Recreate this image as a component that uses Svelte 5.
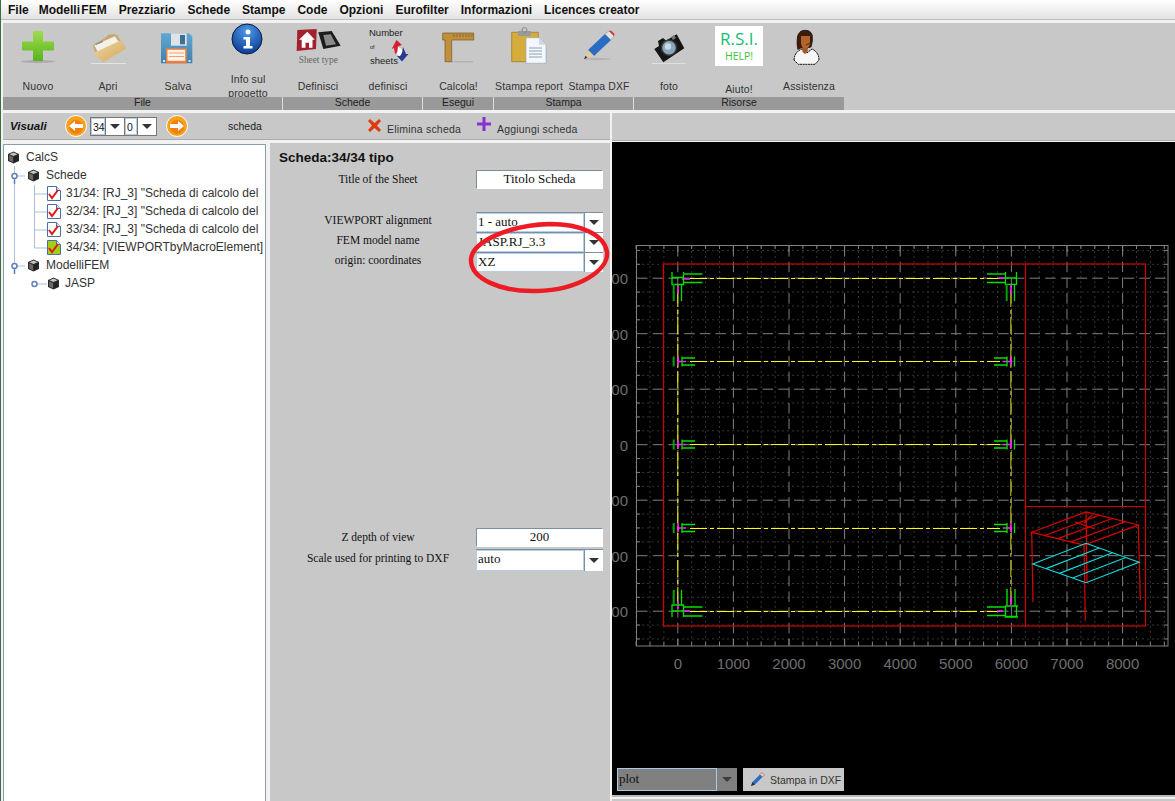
<script>
  const menu = ['File','Modelli FEM','Prezziario','Schede','Stampe','Code','Opzioni','Eurofilter','Informazioni','Licences creator'];
  const sheets = [
    { t:'31/34: [RJ_3] "Scheda di calcolo del', on:false },
    { t:'32/34: [RJ_3] "Scheda di calcolo del', on:false },
    { t:'33/34: [RJ_3] "Scheda di calcolo del', on:false },
    { t:'34/34: [VIEWPORTbyMacroElement]', on:true }
  ];
  const X0 = 677.8, Y0 = 278.2, DX = 55.6, DY = 55.5;
  const majorX = [0,1,2,3,4,5,6,7,8].map(i => X0 + i*DX);
  const majorY = [0,1,2,3,4,5,6].map(i => Y0 + i*DY);
  const minorX = [], minorY = [];
  for (let i=-3;i<=35;i++){ const x=X0+i*DX/4; if(x>636&&x<1168&&i%4!==0) minorX.push(x); }
  for (let i=-2;i<=28;i++){ const y=Y0+i*DY/4; if(y>245&&y<646&&i%4!==0) minorY.push(y); }
  const xLabels = ['0','1000','2000','3000','4000','5000','6000','7000','8000'];
  const yLabels = ['00','00','00','0','00','00','00'];
  const mids = [361.5, 444.5, 528];

  const L=(a,b,t)=>[a[0]+(b[0]-a[0])*t,a[1]+(b[1]-a[1])*t];
  function wire(l,b,r,f){
    const out=[];
    for(const t of [.25,.5,.75]){ out.push([L(l,f,t),L(b,r,t)]); }
    return out;
  }
  const rl=[1031.7,532.3],rb=[1086,512],rr=[1138.3,525],rf=[1084,545];
  const cl=[1032.7,564],cb=[1086,543.3],cr=[1139,562.3],cf=[1086,582.7];
  const pts=(...p)=>p.map(q=>q.join(',')).join(' ');
</script>

{#snippet cube()}
  <svg class="cube" width="13" height="13" viewBox="0 0 13 13"><path d="M6.500 .5 12 3v7l-5.500 2.500L1 10V3z" fill="#2c2c2c"/><path d="M6.500 1.500 10.500 3.200 6.500 5 2.500 3.200z" fill="#c4c4c4"/><path d="M6 6v5.200L2.200 9.500V4.300z" fill="#6a6a6a"/><path d="M7 6v5.200l3.800-1.700V4.300z" fill="#222"/></svg>
{/snippet}

{#snippet sheet(on)}
  <svg class="leaf" width="14" height="15" viewBox="0 0 14 15"><path d="M.5 .5h9l4 4v10H.5z" fill={on ? '#a3d017' : '#fff'} stroke="#4a6fa8"/><path d="M9.500 .5v4h4" fill="#dfe8f5" stroke="#4a6fa8"/><path d="M2 8l3 4 6-8" fill="none" stroke="#e01818" stroke-width="2"/></svg>
{/snippet}

{#snippet icoPlus()}
  <svg class="ico" viewBox="0 0 70 43"><defs><linearGradient id="gp" x1="0" y1="0" x2="0" y2="1"><stop offset="0" stop-color="#9fdc50"/><stop offset="1" stop-color="#58b41c"/></linearGradient></defs><ellipse cx="35" cy="38.500" rx="17" ry="1.500" fill="#aaa"/><path d="M31 8h8a1 1 0 0 1 1 1v9.500h10a1 1 0 0 1 1 1v7a1 1 0 0 1-1 1H40V37a1 1 0 0 1-1 1h-8a1 1 0 0 1-1-1v-9.500H20a1 1 0 0 1-1-1v-7a1 1 0 0 1 1-1h10V9a1 1 0 0 1 1-1z" fill="url(#gp)"/></svg>
{/snippet}
{#snippet icoFolder()}
  <svg class="ico" viewBox="0 0 70 43"><defs><linearGradient id="gf" x1="0" y1="0" x2="1" y2="1"><stop offset="0" stop-color="#eed8a4"/><stop offset="1" stop-color="#d2a659"/></linearGradient></defs><rect x="18" y="40" width="35" height="1" fill="#e4e4e4"/><path d="M20 22l12-7 3-3 6-1 3 1 5 8-27 9z" fill="#c9a568"/><path d="M21 22l21-9 6 9-23 8z" fill="#f4f1e8" stroke="#b8aa8c" stroke-width=".5"/><path d="M22 21l8-3.500v1.500l-7 3z" fill="#8a8a8a"/><path d="M20.500 30l26-12c1.500-.5 2.500 0 3 1l3 5.500c.5 1 0 1.500-1 2.200L31 38.800c-1 .5-2 .5-2.500-.5z" fill="url(#gf)"/></svg>
{/snippet}
{#snippet icoSave()}
  <svg class="ico" viewBox="0 0 70 43"><defs><linearGradient id="gs" x1="0" y1="0" x2="0" y2="1"><stop offset="0" stop-color="#62a8d2"/><stop offset="1" stop-color="#3f7fae"/></linearGradient></defs><path d="M18 10.300h28l3.300 3.300v26.700H18z" fill="url(#gs)"/><path d="M28 10.300h15.700v12.400H28z" fill="#dfe3e6"/><path d="M37 12h5v9.300h-5z" fill="#3e6f94"/><path d="M23 25.300h20.700v15H23z" fill="#ee7d3c"/><path d="M24.500 26.800h17.700v11H24.500z" fill="#fff3e8"/><path d="M26 30h15M26 33.500h15" stroke="#f0a078"/><rect x="20" y="37" width="2" height="2" fill="#dce6ee"/><rect x="45.500" y="37" width="2" height="2" fill="#dce6ee"/></svg>
{/snippet}
{#snippet icoInfo()}
  <svg class="ico" viewBox="0 0 70 43"><defs><radialGradient id="gi" cx=".5" cy=".25" r=".8"><stop offset="0" stop-color="#4d9ae8"/><stop offset="1" stop-color="#08358e"/></radialGradient></defs><circle cx="34" cy="16" r="15" fill="url(#gi)" stroke="#0a1a40"/><circle cx="35" cy="9" r="2.500" fill="#fff"/><path d="M30.500 14h6.500v9h2.500v2.500h-9V23H33v-6.500h-2.500z" fill="#fff"/></svg>
{/snippet}
{#snippet icoType()}
  <svg class="ico" viewBox="0 0 70 43"><path d="M14.300 7 33.700 6 33 26l-19.300 2z" fill="#a3202c"/><path d="M24.300 8.700l7.500 8h-2.300v8h-3.500v-5h-3.500v5h-3.800v-8H16z" fill="#fff"/><path d="M35.300 9.300 48.700 8l9 14.700L40.300 26z" fill="#1c1c1c"/><path d="M40.300 12l7.400-.7 5.300 10-10 1.400z" fill="#8a8a8a"/><text x="35.300" y="39.500" class="st">Sheet type</text></svg>
{/snippet}
{#snippet icoNumber()}
  <svg class="ico" viewBox="0 0 70 43"><text x="16" y="13" class="nt">Number</text><text x="17" y="25.500" class="nt small">of</text><text x="17" y="40.500" class="nt">sheets</text><path d="M43.500 17 49 22l-3 1 1 4-5 4-1-6-2.300 1z" fill="#d42030"/><path d="M45 23l5 5-1 7-5-4z" fill="#fff"/><path d="M50 24l3 7h2.500L49 38.500 44 33h3l2-3z" fill="#2a3a94"/></svg>
{/snippet}
{#snippet icoRuler()}
  <svg class="ico" viewBox="0 0 70 43"><rect x="24" y="38" width="25" height="1.500" fill="#b4b4b4"/><path d="M18.700 10H49.700V17H27.700V38.700H21V17H18.700z" fill="#bf8f3e" stroke="#7a5a24" stroke-width=".7"/><path d="M30 11v3M33 11v3M36 11v3M39 11v3M42 11v3M45 11v3M48 11v3" stroke="#7a5a24" stroke-width=".7"/></svg>
{/snippet}
{#snippet icoClip()}
  <svg class="ico" viewBox="0 0 70 43"><path d="M17.700 9.300h26.600v29.400H17.700z" fill="#d6ac3c" stroke="#a07c24" stroke-width=".8"/><path d="M24 8h13v5H24z" fill="#9a9a9a"/><circle cx="30.500" cy="7" r="2.500" fill="none" stroke="#888"/><path d="M32 14.700h13l7 7v18.600H32z" fill="#f4f7fb" stroke="#9ab" stroke-width=".7"/><path d="M45 14.700v7h7" fill="#cfd8e2"/><path d="M35 25h13M35 28h13M35 31h13M35 34h13" stroke="#8aa0b8"/></svg>
{/snippet}
{#snippet icoPencil()}
  <svg class="ico" viewBox="0 0 70 43"><ellipse cx="33" cy="36" rx="14" ry="1.200" fill="#b4b4b4"/><path d="M24 27 41 11l6 6-17 16z" fill="#2a6cc4"/><path d="M24 27l6 6-10 3.300z" fill="#e0c9a0"/><path d="M20 36.300l1.500-3.500 2 2z" fill="#333"/><path d="M41 11l4-3 5 5-3 4z" fill="#e2e2e2" stroke="#888" stroke-width=".5"/><path d="M45 8l2-.5 3.500 3.500-.5 2z" fill="#d83030"/></svg>
{/snippet}
{#snippet icoCam()}
  <svg class="ico" viewBox="0 0 70 43"><rect x="18" y="40" width="34" height="1" fill="#e0e0e0"/><path d="M20.300 26 25 23l-1-5 5-3 3 2.500L42.700 11.300 50.300 25.300 29.300 39.300z" fill="#151515"/><path d="M37 14l3-2 2 3-3 2z" fill="#777"/><circle cx="35" cy="24.700" r="7.500" fill="#8aa6ba" stroke="#3a3a3a" stroke-width="1.500"/><circle cx="34" cy="23.500" r="3.200" fill="#c8dae6"/></svg>
{/snippet}
{#snippet icoRsi()}
  <div class="rsi"><div class="rsi1">R.S.I.</div><div class="rsi2">HELP!</div></div>
{/snippet}
{#snippet icoPerson()}
  <svg class="ico" viewBox="0 0 70 43"><path d="M20 37c.5-6 3-9 8-11l5 4 5-4c4 2 7 5 7 11l-4 4.300H24.300z" fill="#f6f6f6" stroke="#111" stroke-width="1" stroke-dasharray="2 .6"/><path d="M23 14c1-6 6-7 9-7s6 2 6.500 6c.5 4 0 8-1 11l-2 1H28l-4.500 2c-1-4-1-9-.5-13z" fill="#3c1d0c"/><path d="M27 13h9v7c-.5 4-3 6-5 6s-3.500-2.500-4-6z" fill="#b5622d"/><path d="M28 25h6l-.5 4-2.500 2-2.500-2z" fill="#a5582a"/><path d="M26 9c4-3 10-2 12 3v7" fill="none" stroke="#222" stroke-width="1"/><path d="M38 19l-6 3" stroke="#222" stroke-width=".8"/></svg>
{/snippet}

{#snippet tool(label, icon)}
  <div class="tool">
    <div class="icon">{@render icon()}</div>
    <div class="lab"><span>{label}</span></div>
  </div>
{/snippet}

{#snippet combo(value, cls = '')}
  <div class="combo {cls}"><div class="cval">{value}</div><div class="carrow"><i></i></div></div>
{/snippet}

<div class="app">
  <nav class="menu">
    {#each menu as m}<span>{m}</span>{/each}
  </nav>

  <div class="body">
    <section class="ribbon">
      <div class="group g280">
        <div class="tools">
          {@render tool('Nuovo', icoPlus)}
          {@render tool('Apri', icoFolder)}
          {@render tool('Salva', icoSave)}
          {@render tool('Info sul progetto', icoInfo)}
        </div>
        <div class="gname">File</div>
      </div>
      <div class="group g140">
        <div class="tools">
          {@render tool('Definisci', icoType)}
          {@render tool('definisci', icoNumber)}
        </div>
        <div class="gname">Schede</div>
      </div>
      <div class="group g71">
        <div class="tools">{@render tool('Calcola!', icoRuler)}</div>
        <div class="gname">Esegui</div>
      </div>
      <div class="group g140">
        <div class="tools">
          {@render tool('Stampa report', icoClip)}
          {@render tool('Stampa DXF', icoPencil)}
        </div>
        <div class="gname">Stampa</div>
      </div>
      <div class="group g210 last">
        <div class="tools">
          {@render tool('foto', icoCam)}
          <div class="tool aiuto">
            <div class="icon">{@render icoRsi()}</div>
            <div class="lab"><span>Aiuto!</span></div>
          </div>
          {@render tool('Assistenza', icoPerson)}
        </div>
        <div class="gname">Risorse</div>
      </div>
    </section>

    <div class="split">
      <div class="leftside">
        <div class="bar2">
          <b class="visuali">Visuali</b>
          <svg class="round" width="22" height="22" viewBox="0 0 22 22"><circle cx="11" cy="11" r="10.500" fill="#f7a21a" stroke="#fff"/><circle cx="11" cy="12" r="7" fill="#f08010"/><path d="M4 11l6-5v3h8v4h-8v3z" fill="#fff"/></svg>
          <div class="spin">
            <span class="num">34</span><span class="sar"><i></i></span>
            <span class="num n2">0</span><span class="sar"><i></i></span>
          </div>
          <svg class="round r2" width="22" height="22" viewBox="0 0 22 22"><circle cx="11" cy="11" r="10.500" fill="#f7a21a" stroke="#fff"/><circle cx="11" cy="12" r="7" fill="#f08010"/><path d="M18 11l-6-5v3H4v4h8v3z" fill="#fff"/></svg>
          <span class="sc">scheda</span>
          <svg class="xi" width="15" height="15" viewBox="0 0 15 15"><path d="M1 3l2-2 4.500 4L12 1l2 2-4 4.500 4 4.500-2 2-4.500-4L3 14l-2-2 4-4.500z" fill="#e03a10"/></svg>
          <span class="act a1">Elimina scheda</span>
          <svg class="pl" width="14" height="14" viewBox="0 0 14 14"><path d="M5.500 0h3v5.500H14v3H8.500V14h-3V8.500H0v-3h5.500z" fill="#8a2fd0"/></svg>
          <span class="act a2">Aggiungi scheda</span>
        </div>

        <div class="panes">
          <aside class="tree">
            <svg class="lines" width="60" height="150" viewBox="0 0 60 150">
              <g stroke="#a9bfdc" fill="none">
                <path d="M10.500 21V121M10.500 31H21M10.500 121H21M30.500 40V103M30.500 49H43M30.500 67H43M30.500 85H43M30.500 103H43M30.500 139H43"/>
              </g>
              <g fill="#fff" stroke="#5c7fb8" stroke-width="1.500">
                <circle cx="10.500" cy="31" r="2.500"/><circle cx="10.500" cy="121" r="2.500"/><circle cx="30.500" cy="139" r="2.500"/>
              </g>
              <path d="M10.500 33v6M10.500 123v6" stroke="#5c7fb8" stroke-width="1.500"/>
            </svg>
            <div class="node l0">{@render cube()}<span>CalcS</span></div>
            <div class="node l1">{@render cube()}<span>Schede</span></div>
            {#each sheets as s}
              <div class="node l2">{@render sheet(s.on)}<span>{s.t}</span></div>
            {/each}
            <div class="node l1">{@render cube()}<span>ModelliFEM</span></div>
            <div class="node l2">{@render cube()}<span>JASP</span></div>
          </aside>

          <main class="form">
            <h2>Scheda:34/34 tipo</h2>
            <div class="row r19"><label>Title of the Sheet</label><div class="input">Titolo Scheda</div></div>
            <div class="sel1">
              <div class="row r20"><label>VIEWPORT alignment</label>{@render combo('1 - auto')}</div>
              <div class="row r20"><label>FEM model name</label>{@render combo('JASP.RJ_3.3')}</div>
              <div class="row r20"><label>origin: coordinates</label>{@render combo('XZ')}</div>
            </div>
            <div class="sel2">
              <div class="row r19"><label>Z depth of view</label><div class="input">200</div></div>
              <div class="row r22"><label>Scale used for printing to DXF</label>{@render combo('auto')}</div>
            </div>
            <svg class="ring" width="150" height="80" viewBox="0 0 150 80"><path d="M6 40C8 22 45 6 85 5c30 0 54 10 57 28 2 18-28 38-70 39C36 73 5 60 6 40z" fill="none" stroke="#ed1c24" stroke-width="4.500"/></svg>
          </main>
        </div>
      </div>

      <div class="rightside">
        <div class="bar2 blank"></div>
        <div class="plot">
          <svg class="chart" width="563" height="653" viewBox="612 142 563 653">
            <g stroke="#363636" stroke-dasharray="2 3">
              {#each minorX as x}<line x1={x} x2={x} y1="246" y2="645"/>{/each}
              {#each minorY as y}<line y1={y} y2={y} x1="637" x2="1167"/>{/each}
            </g>
            <g stroke="#808080" stroke-dasharray="10.500 5.200">
              {#each majorX as x}<line x1={x} x2={x} y1="246" y2="645"/>{/each}
              {#each majorY as y}<line y1={y} y2={y} x1="637" x2="1167"/>{/each}
            </g>
            <rect x="636.500" y="245.500" width="531.500" height="400.500" fill="none" stroke="#808080"/>
            <g stroke="#808080">
              {#each minorX as x}<line x1={x} x2={x} y1="642" y2="646"/><line x1={x} x2={x} y1="245" y2="249"/>{/each}
              {#each majorX as x}<line x1={x} x2={x} y1="639" y2="646"/><line x1={x} x2={x} y1="245" y2="252"/>{/each}
              {#each minorY as y}<line y1={y} y2={y} x1="636" x2="640"/><line y1={y} y2={y} x1="1164" x2="1168"/>{/each}
            </g>
            {#each xLabels as t, i}<text x={majorX[i]} y="669" class="ax" text-anchor="middle">{t}</text>{/each}
            {#each yLabels as t, i}<text x="628" y={majorY[i]+6} class="ax" text-anchor="end">{t}</text>{/each}

            <g fill="none" stroke="#d40000" stroke-width="1.200">
              <rect x="663.500" y="264" width="482" height="362"/>
              <path d="M1025.500 264V626M1025.500 506.500H1145.500"/>
            </g>

            <g fill="none" stroke="#ffff00" stroke-width="1" stroke-dasharray="17 3 4 3">
              <path d="M690 278.500H1000M690 361.500H1000M690 444.500H1000M690 528.500H1000M690 611.500H1000"/>
              <path d="M677.800 290V605"/>
            </g>
            <path d="M1010.800 290V605" fill="none" stroke="#b0b000" stroke-width="1.200" stroke-dasharray="17 3 4 3"/>

            <g fill="none" stroke="#ff20ff" stroke-width="1.600">
              {#each mids as y}
                <path d="M678 {y-5}v9M678 {y}h8M1011 {y-5}v9M1011 {y}h-8"/>
              {/each}
              <path d="M678 284v10M682 279h8M1011 284v10M1006 278h-8M678 601v8M682 611h8M1011 597v8M1003 611h-6"/>
            </g>
            <g fill="none" stroke="#00e000" stroke-width="1.300">
              {#each mids as y}
                <path d="M682 {y-5}v10M682 {y-3.500}h13M682 {y+3.500}h13M1014.500 {y-5}v10M1007 {y-3.500}h-13M1007 {y+3.500}h-13M1007 {y-5}v10"/>
              {/each}
              <path d="M672 277.500h11.500v7H672zM672 272v12M683.500 272v12M683.500 282.500h19M681.500 284v17"/>
              <path d="M1005.500 278h11v6.300h-11zM1005.500 272v12M1016.500 272v12M1005 282.500h-18M1014.500 284v17"/>
              <path d="M672 605h11.500v6H672zM672 605v12M683.500 605v12M683.500 607h19M683.500 616h19M681.500 590v15"/>
              <path d="M1005.500 606h11v10.500h-11zM1005 606h13M1005 617h13M1005 607h-18M1005 615.500h-18M1015 589v17"/>
            </g>
            <g fill="none" stroke="#00a000" stroke-width="2">
              {#each mids as y}<path d="M673.700 {y-5}v10"/>{/each}
              <path d="M683.500 274h19M673.700 284v17M673.700 590v15M1005 274h-18M1006.700 284v17M1007 589v16"/>
            </g>

            <g fill="none" stroke="#e00000" stroke-width="1.200">
              <polygon points={pts(rl,rb,rr,rf)}/>
              {#each wire(rl,rb,rr,rf) as w}<polyline points={pts(w[0],w[1])}/>{/each}
              <path d="M1075 522l20 7M1092 515l-8 8"/>
              <path d="M1031.700 532.300l1.300 70M1084 545l1.300 75.700M1138.300 525l2 75M1086 512l1 71"/>
            </g>
            <g fill="none" stroke="#10dada" stroke-width="1.200">
              <polygon points={pts(cl,cb,cr,cf)}/>
              {#each wire(cl,cb,cr,cf) as w}<polyline points={pts(w[0],w[1])}/>{/each}
            </g>
          </svg>

          <div class="controls">
            <div class="plotsel"><div class="pval">plot</div><div class="parr"><i></i></div></div>
            <div class="dxf">
              <svg width="15" height="15" viewBox="0 0 15 15"><path d="M1 14l1.500-4L10 2.500l2.500 2.500L5 12.500z" fill="#2a6cc4"/><path d="M10 2.500l2-2 2.500 2.500-2 2z" fill="#d8d8d8" stroke="#c04040" stroke-width=".6"/><path d="M1 14l1.500-4 2.500 2.500z" fill="#333"/></svg>
              <span>Stampa in DXF</span>
            </div>
          </div>
        </div>
        <div class="foot"></div>
      </div>
    </div>
  </div>
</div>

<style>
  :global(body) { margin: 0; background: #f2f2f2; }
  .app { width: 1175px; height: 801px; overflow: hidden; display: flex; flex-direction: column; box-sizing: border-box; border-left: 1px solid #3d6e3d; background: #f2f2f2; font-family: "Liberation Sans", Arial, sans-serif; color: #222; }

  .menu { height: 19px; flex: none; display: flex; align-items: center; gap: 12px; padding-left: 7px; background: linear-gradient(#fff, #e2e2e2); border-bottom: 1px solid #bdbdbd; font-weight: 700; font-size: 12px; color: #111; }
  .menu span:nth-child(1) { margin-right: -2px; }
  .menu span:nth-child(2) { word-spacing: -2px; }

  .body { flex: 1; min-height: 0; padding: 3px 0 0 2px; display: flex; flex-direction: column; }

  .ribbon { flex: none; height: 87px; display: flex; background: #c8c8c8; }
  .group { display: flex; flex-direction: column; flex: none; }
  .g280 { width: 280px; } .g140 { width: 140px; } .g71 { width: 71px; } .g210 { width: 210px; }
  .tools { display: flex; height: 74px; flex: none; }
  .gname { height: 13px; flex: none; background: #999; border-right: 1px solid #ddd; text-align: center; font-size: 10.500px; line-height: 11px; color: #222; }
  .last .gname { border-right: 0; }
  .tool { flex: 1 1 0; min-width: 0; height: 74px; overflow: hidden; }
  .icon { height: 43px; display: flex; justify-content: center; }
  .ico { width: 70px; height: 43px; display: block; flex: none; }
  .lab { height: 40px; display: flex; align-items: center; justify-content: center; text-align: center; }
  .lab span { display: block; max-width: 68px; font-size: 10.500px; line-height: 14px; letter-spacing: .1px; color: #333; }
  .aiuto .lab { padding-top: 3px; }
  .st { font: 9.300px "Liberation Serif", serif; fill: #666; text-anchor: middle; }
  .nt { font: 9.500px "Liberation Sans", sans-serif; fill: #222; }
  .nt.small { font-size: 5.500px; }
  .rsi { width: 48px; height: 40px; margin-top: 3px; background: #fff; text-align: center; font-family: "Open Sans", sans-serif; }
  .rsi1 { font-size: 17px; line-height: 22px; padding-top: 2px; color: #14bc78; }
  .rsi2 { font-size: 10.500px; line-height: 13px; color: #36c436; }

  .split { flex: 1; min-height: 0; margin-top: 3px; display: flex; gap: 2px; }
  .leftside { width: 607px; flex: none; display: flex; flex-direction: column; }
  .rightside { flex: 1; min-width: 0; display: flex; flex-direction: column; }
  .bar2 { height: 26px; flex: none; display: flex; align-items: center; background: #c8c8c8; border-bottom: 1px solid #aaa; font-size: 10.500px; color: #333; }
  .bar2.blank { height: 27px; margin-bottom: 1px; }
  .visuali { margin-left: 7px; width: 55px; font-size: 11.500px; font-style: italic; color: #111; flex: none; }
  .round { flex: none; }
  .spin { margin-left: 3px; width: 67px; height: 19px; display: flex; flex: none; background: #fff; border: 1px solid #777; box-sizing: border-box; font-size: 10.500px; }
  .num { width: 14px; line-height: 17px; padding-left: 1px; box-sizing: border-box; border: 1px solid #b6cde8; color: #111; }
  .num.n2 { width: 12px; }
  .sar { flex: 1; display: flex; align-items: center; justify-content: center; border-left: 1px solid #777; border-right: 1px solid #777; }
  .sar:last-child { border-right: 0; }
  .sar i, .carrow i, .parr i { display: block; width: 0; height: 0; border-left: 5.500px solid transparent; border-right: 5.500px solid transparent; border-top: 5px solid #333; }
  .r2 { margin-left: 9px; }
  .sc { margin-left: 40px; width: 132px; flex: none; color: #222; }
  .xi { flex: none; margin-left: 7px; margin-top: -2px; }
  .act { flex: none; margin-top: 5px; letter-spacing: .2px; }
  .a1 { margin-left: 5px; width: 90px; }
  .pl { flex: none; margin-top: -4px; }
  .a2 { margin-left: 6px; }

  .panes { flex: 1; min-height: 0; margin-top: 3px; display: flex; gap: 4px; }
  .tree { position: relative; width: 263px; flex: none; box-sizing: border-box; margin-top: 1px; padding-top: 3px; background: #fff; border: 1px solid #8b9cb0; border-bottom: 0; font-size: 12px; color: #333; overflow: hidden; }
  .lines { position: absolute; left: 0; top: 0; }
  .node { position: relative; height: 18px; display: flex; align-items: center; white-space: nowrap; }
  .node :global(svg) { flex: none; }
  .l0 { padding-left: 3px; gap: 6px; }
  .l1 { padding-left: 23px; gap: 6px; }
  .l2 { padding-left: 43px; gap: 5px; }

  .form { position: relative; flex: 1; min-width: 0; background: #c8c8c8; padding-top: 7px; font-family: "Liberation Serif", "Times New Roman", serif; color: #111; }
  h2 { margin: 0 0 2px 9px; height: 18px; font: 700 13.500px/16px "Liberation Sans", Arial, sans-serif; }
  .row { display: flex; align-items: center; padding-right: 7px; }
  label { width: 196px; margin-left: 10px; flex: none; box-sizing: border-box; padding-bottom: 4px; text-align: center; font-size: 11.500px; }
  .r19 label { padding-bottom: 1px; }
  .r19 { height: 19px; } .r20 { height: 20px; } .r22 { height: 22px; margin-top: 2px; }
  .input { width: 127px; height: 100%; box-sizing: border-box; background: #fff; border: 1px solid #7c8ea2; border-right-color: #fff; border-bottom-color: #fff; text-align: center; font-size: 13px; line-height: 16px; }
  .combo { width: 127px; height: 100%; display: flex; box-sizing: border-box; background: #fff; border-top: 1px solid #7c8ea2; }
  .cval { flex: 1; min-width: 0; padding-left: 1px; border: 1px solid #b6cde8; font-size: 13px; line-height: 15px; }
  .carrow { width: 18px; flex: none; display: flex; align-items: center; justify-content: center; border-left: 1px solid #7c8ea2; }
  .sel1 { margin-top: 23px; }
  .sel2 { margin-top: 256px; }
  .ring { position: absolute; left: 195px; top: 76px; }

  .plot { position: relative; height: 653px; flex: none; background: #000; overflow: hidden; }
  .chart { display: block; }
  .ax { font: 15px "Liberation Sans", Arial, sans-serif; fill: #6e6e6e; }
  .controls { position: absolute; left: 5px; bottom: 4px; display: flex; gap: 6px; }
  .plotsel { width: 120px; height: 23px; display: flex; background: #808080; box-sizing: border-box; }
  .pval { flex: 1; box-sizing: border-box; border: 1px solid #a8c8ea; padding-left: 1px; font: 13px/19px "Liberation Serif", serif; color: #111; }
  .parr { width: 20px; display: flex; align-items: center; justify-content: center; }
  .parr i { border-top-color: #3c3c3c; }
  .dxf { width: 101px; height: 23px; display: flex; align-items: center; gap: 5px; padding-left: 7px; box-sizing: border-box; background: #c8c8c8; font-size: 10.500px; color: #333; }
  .foot { flex: 1; border-top: 2px solid #b8b8b8; border-bottom: 2px solid #c8c8c8; background: #f2f2f2; box-sizing: border-box; }
</style>
